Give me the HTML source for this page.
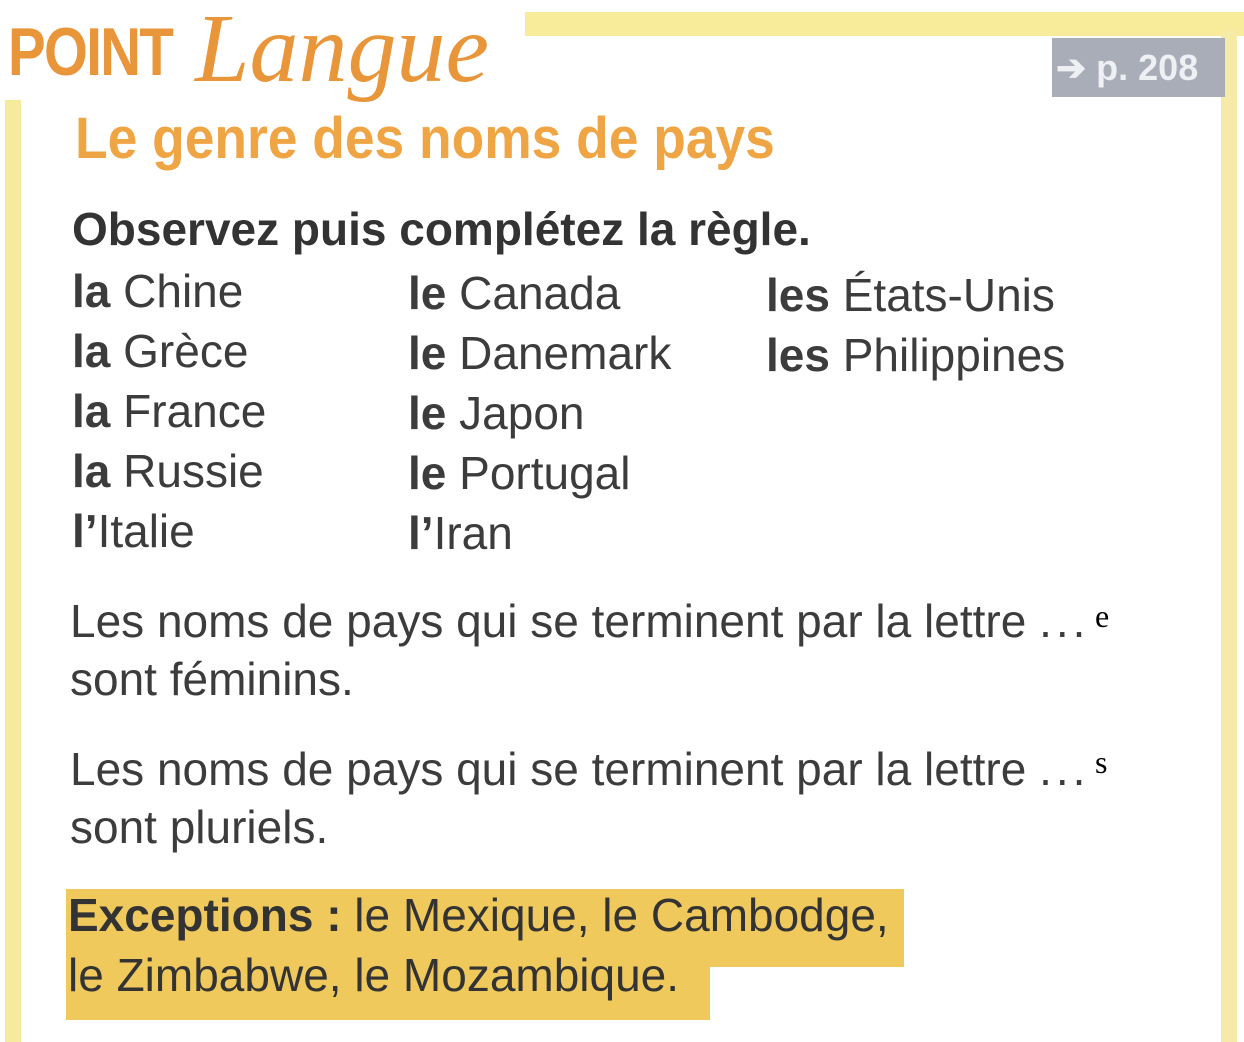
<!DOCTYPE html>
<html><head><meta charset="utf-8"><style>
html,body{margin:0;padding:0;}
body{width:1244px;height:1042px;position:relative;overflow:hidden;background:#fff;font-family:"Liberation Sans",sans-serif;}
.a{position:absolute;white-space:nowrap;}
.t{color:#3c3c3c;font-size:46px;line-height:1;}
.b{font-weight:bold;color:#333;}
</style></head><body>
<div class="a" style="left:525px;top:12px;width:719px;height:24px;background:#f8eb9a"></div>
<div class="a" style="left:5px;top:100px;width:16px;height:942px;background:#f6ea9c"></div>
<div class="a" style="left:1221px;top:30px;width:16px;height:1012px;background:#f6eba6"></div>
<div class="a" style="left:1052px;top:38px;width:173px;height:59px;background:#a9adb7"></div>
<div class="a" style="left:1056px;top:50px;color:#eef0f4;font-size:36px;font-weight:bold;line-height:1">➔ p. 208</div>
<div class="a" style="left:8px;top:18px;color:#e9953a;font-size:68px;font-weight:bold;line-height:1;letter-spacing:-2px;transform:scaleX(0.83);transform-origin:left">POINT</div>
<div class="a" style="left:195px;top:0px;color:#e9953a;font-size:98px;font-style:italic;font-family:'Liberation Serif',serif;line-height:1">Langue</div>
<div class="a" style="left:75px;top:110px;color:#f0a545;font-size:58px;font-weight:bold;line-height:1;transform:scaleX(0.92);transform-origin:left">Le genre des noms de pays</div>
<div class="a b" style="left:72px;top:206px;font-size:46px;line-height:1">Observez puis complétez la règle.</div>
<div class="a t" style="left:72px;top:268px"><b>la</b> Chine</div>
<div class="a t" style="left:72px;top:328px"><b>la</b> Grèce</div>
<div class="a t" style="left:72px;top:388px"><b>la</b> France</div>
<div class="a t" style="left:72px;top:448px"><b>la</b> Russie</div>
<div class="a t" style="left:72px;top:508px"><b>l’</b>Italie</div>
<div class="a t" style="left:408px;top:270px"><b>le</b> Canada</div>
<div class="a t" style="left:408px;top:330px"><b>le</b> Danemark</div>
<div class="a t" style="left:408px;top:390px"><b>le</b> Japon</div>
<div class="a t" style="left:408px;top:450px"><b>le</b> Portugal</div>
<div class="a t" style="left:408px;top:510px"><b>l’</b>Iran</div>
<div class="a t" style="left:766px;top:272px"><b>les</b> États-Unis</div>
<div class="a t" style="left:766px;top:332px"><b>les</b> Philippines</div>
<div class="a t" style="left:70px;top:598px">Les noms de pays qui se terminent par la lettre <span style="letter-spacing:4px">...</span></div>
<div class="a" style="left:1095px;top:598px;font-family:'Liberation Serif',serif;font-size:32px">e</div>
<div class="a t" style="left:70px;top:656px">sont féminins.</div>
<div class="a t" style="left:70px;top:746px">Les noms de pays qui se terminent par la lettre <span style="letter-spacing:4px">...</span></div>
<div class="a" style="left:1095px;top:744px;font-family:'Liberation Serif',serif;font-size:32px">s</div>
<div class="a t" style="left:70px;top:804px">sont pluriels.</div>
<div class="a" style="left:66px;top:889px;width:838px;height:78px;background:#f0c95c"></div>
<div class="a" style="left:66px;top:967px;width:644px;height:53px;background:#f0c95c"></div>
<div class="a t" style="left:68px;top:892px;color:#333"><b>Exceptions :</b> le Mexique, le Cambodge,</div>
<div class="a t" style="left:68px;top:952px;color:#333">le Zimbabwe, le Mozambique.</div>
</body></html>
